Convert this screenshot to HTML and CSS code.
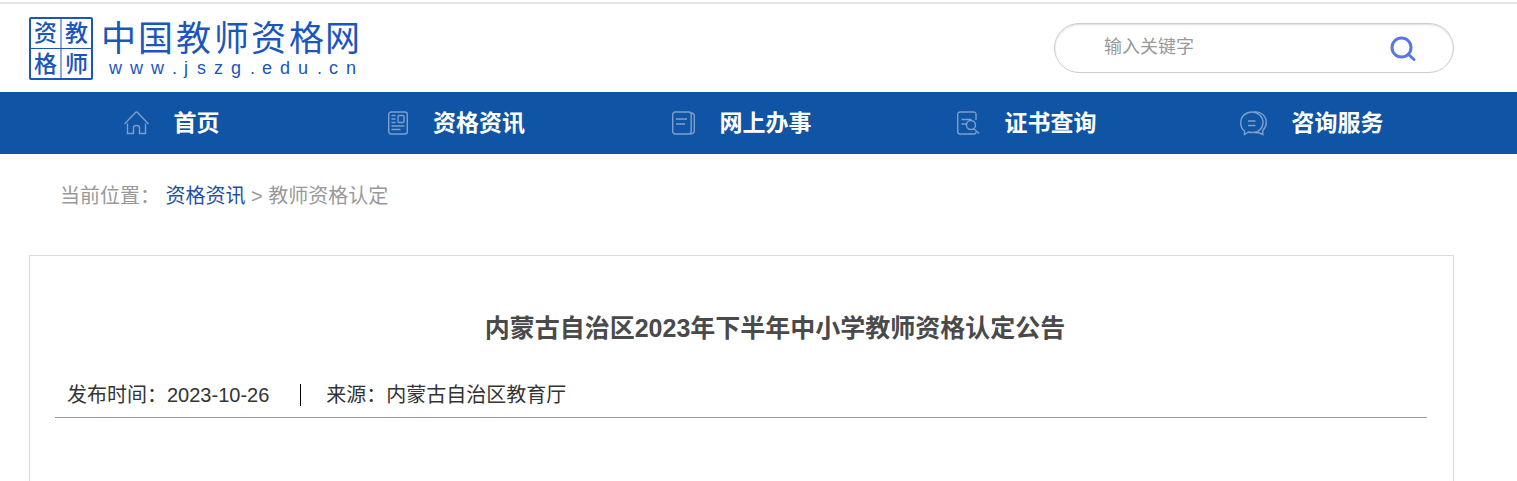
FILE: index.html
```html
<!DOCTYPE html>
<html lang="zh-CN">

<head>
    <meta charset="UTF-8">
    <meta name="viewport" content="width=device-width, initial-scale=1.0">
    <title>中国教师资格网</title>
    <link rel="stylesheet" href="styles.css">
</head>

<body>
    <header class="header">
        <a class="logo" href="#">
            <svg width="332" height="66" viewBox="0 0 332 66">
                <g fill="none" stroke="#1a56bd">
                    <rect x="1" y="3" width="62" height="61" rx="1" stroke-width="2"/>
                    <path d="M32 4v60M1 33.500h62" stroke-width="1"/>
                </g>
                <g class="seal">
                    <text x="5" y="26">资</text>
                    <text x="36" y="26">教</text>
                    <text x="5" y="57">格</text>
                    <text x="36" y="57">师</text>
                </g>
                <text class="logo-name" x="72 109 147 185 222 260 296" y="36">中国教师资格网</text>
                <text class="logo-url" x="80 101 122 143 155 168 185 202 221 233 251 269 288 300 317" y="59">www.jszg.edu.cn</text>
            </svg>
        </a>
        <form class="search">
            <input type="text" placeholder="输入关键字" aria-label="输入关键字">
            <button type="submit" aria-label="搜索">
                <svg width="28" height="28" viewBox="0 0 28 28" fill="none" stroke="#5577ea" stroke-linecap="round">
                    <circle cx="12.500" cy="13.500" r="9.500" stroke-width="3"/>
                    <path d="M19.500 20.500l5.500 5" stroke-width="3"/>
                </svg>
            </button>
        </form>
    </header>

    <nav class="nav">
        <a href="#">
            <svg width="25" height="24" viewBox="0 0 25 24">
                <path d="M.5 13L11.500 1.500q1-1 2 0L24.500 13M3.500 12.500v10h6v-6q0-2 3-2t3 2v6h6v-10"/>
            </svg>
            <span>首页</span>
        </a>
        <a href="#">
            <svg width="20" height="24" viewBox="0 0 20 24">
                <rect x=".7" y="1" width="18.600" height="22" rx="2.500"/>
                <rect x="10" y="4.500" width="6" height="7" rx="1"/>
                <path d="M3.500 4.500h4M3.500 8h4M3.500 11.500h4M3.500 15h13M3.500 18.500h9"/>
            </svg>
            <span>资格资讯</span>
        </a>
        <a href="#">
            <svg width="23" height="24" viewBox="0 0 23 24">
                <rect x=".7" y="1" width="18.500" height="22" rx="2.500"/>
                <path d="M4 8h11M4 13h9M19 2q3.300 0 3.300 3v15q0 3-4.500 3"/>
            </svg>
            <span>网上办事</span>
        </a>
        <a href="#">
            <svg width="23" height="24" viewBox="0 0 23 24">
                <path d="M19 9V3.500q0-2.500-2.500-2.500H3.200Q.7 1 .7 3.500v17q0 2.500 2.500 2.500h13.300q2.500 0 2.500-2M4.500 8.500h10M4.500 13h5"/>
                <circle cx="14" cy="14" r="4.500"/>
                <path d="M17 18l5 4.500"/>
            </svg>
            <span>证书查询</span>
        </a>
        <a href="#">
            <svg width="27" height="25" viewBox="0 0 27 25">
                <path d="M4.500 23.500V20Q.7 17 .7 12C.7 5 6 1 12 1s11 4.500 11 10.500S18.500 21.500 12 21.500q-2 0-3.500-.5z"/>
                <path d="M14 1c7-1 12.300 4 12.300 10.500 0 4-1.500 6-3.500 8v4l-4-2q-2 .5-4 0M8 10h7.500M8 14.500h7.500"/>
            </svg>
            <span>咨询服务</span>
        </a>
    </nav>

    <main class="main">
        <div class="crumbs">当前位置： <a href="#">资格资讯</a> &gt; 教师资格认定</div>
        <article class="article">
            <h1>内蒙古自治区2023年下半年中小学教师资格认定公告</h1>
            <div class="info">
                <span class="date">发布时间：2023-10-26</span>
                <span class="source">来源：内蒙古自治区教育厅</span>
            </div>
        </article>
    </main>
</body>

</html>
```

FILE: styles.css
```css
* {
    box-sizing: border-box;
}
body {
    margin: 0;
    min-height: 100vh;
    display: flex;
    flex-direction: column;
    border-top: 2px solid #fff;
    font-family: "Liberation Sans", "Noto Sans CJK SC", sans-serif;
    font-size: 20px;
    color: #333;
    background-color: #fff;
}
a {
    text-decoration: none;
}

/* header */
.header {
    display: flex;
    justify-content: space-between;
    align-items: center;
    height: 90px;
    padding: 0 63px 0 29px;
    border-top: 2px solid #e6e6e6;
}
.logo svg {
    display: block;
}
.logo text {
    fill: #1a56bd;
}
.seal {
    font-size: 23px;
    font-weight: 500;
}
.logo-name {
    font-size: 35px;
}
.logo-url {
    font-size: 18px;
}
.search {
    display: flex;
    align-items: center;
    width: 400px;
    height: 50px;
    padding: 0 36px 0 49px;
    border: 1px solid #ccc;
    border-radius: 25px;
    box-shadow: inset 0 1px 2px #ddd;
}
.search input {
    flex: 1;
    min-width: 0;
    padding: 0 0 2px;
    border: 0;
    outline: 0;
    background: none;
    font-family: inherit;
    font-size: 18px;
}
.search input::placeholder {
    color: #999;
}
.search button {
    padding: 0;
    border: 0;
    background: none;
    cursor: pointer;
}
.search svg {
    display: block;
}

/* main menu */
.nav {
    display: flex;
    height: 62px;
    padding: 0 63px 0 29px;
    background-color: #1054a5;
}
.nav a {
    flex: 1;
    display: flex;
    justify-content: center;
    align-items: center;
    gap: 25px;
    color: #fff;
    font-size: 23px;
    font-weight: bold;
}
.nav span {
    padding-bottom: 5px;
}
.nav svg {
    fill: none;
    stroke: #7d9fcc;
    stroke-width: 1.4;
}

/* content */
.main {
    flex: 1;
    display: flex;
    flex-direction: column;
    padding: 0 63px 0 29px;
}
.crumbs {
    padding: 27px 31px 44px;
    line-height: 30px;
    color: #999;
}
.crumbs a {
    color: #1f4fa5;
}
.article {
    flex: 1;
    padding: 52px 26px 0 25px;
    border: 1px solid #ddd;
    border-bottom: 0;
}
.article h1 {
    margin: 0;
    padding-left: 68px;
    line-height: 40px;
    font-size: 25px;
    text-align: center;
    color: #4a4a4a;
}
.info {
    display: flex;
    align-items: center;
    padding: 36px 12px 11px;
    border-bottom: 1px solid #999;
    line-height: 22px;
}
.source {
    margin-left: 31px;
    padding-left: 25px;
    border-left: 1px solid #000;
}
```
